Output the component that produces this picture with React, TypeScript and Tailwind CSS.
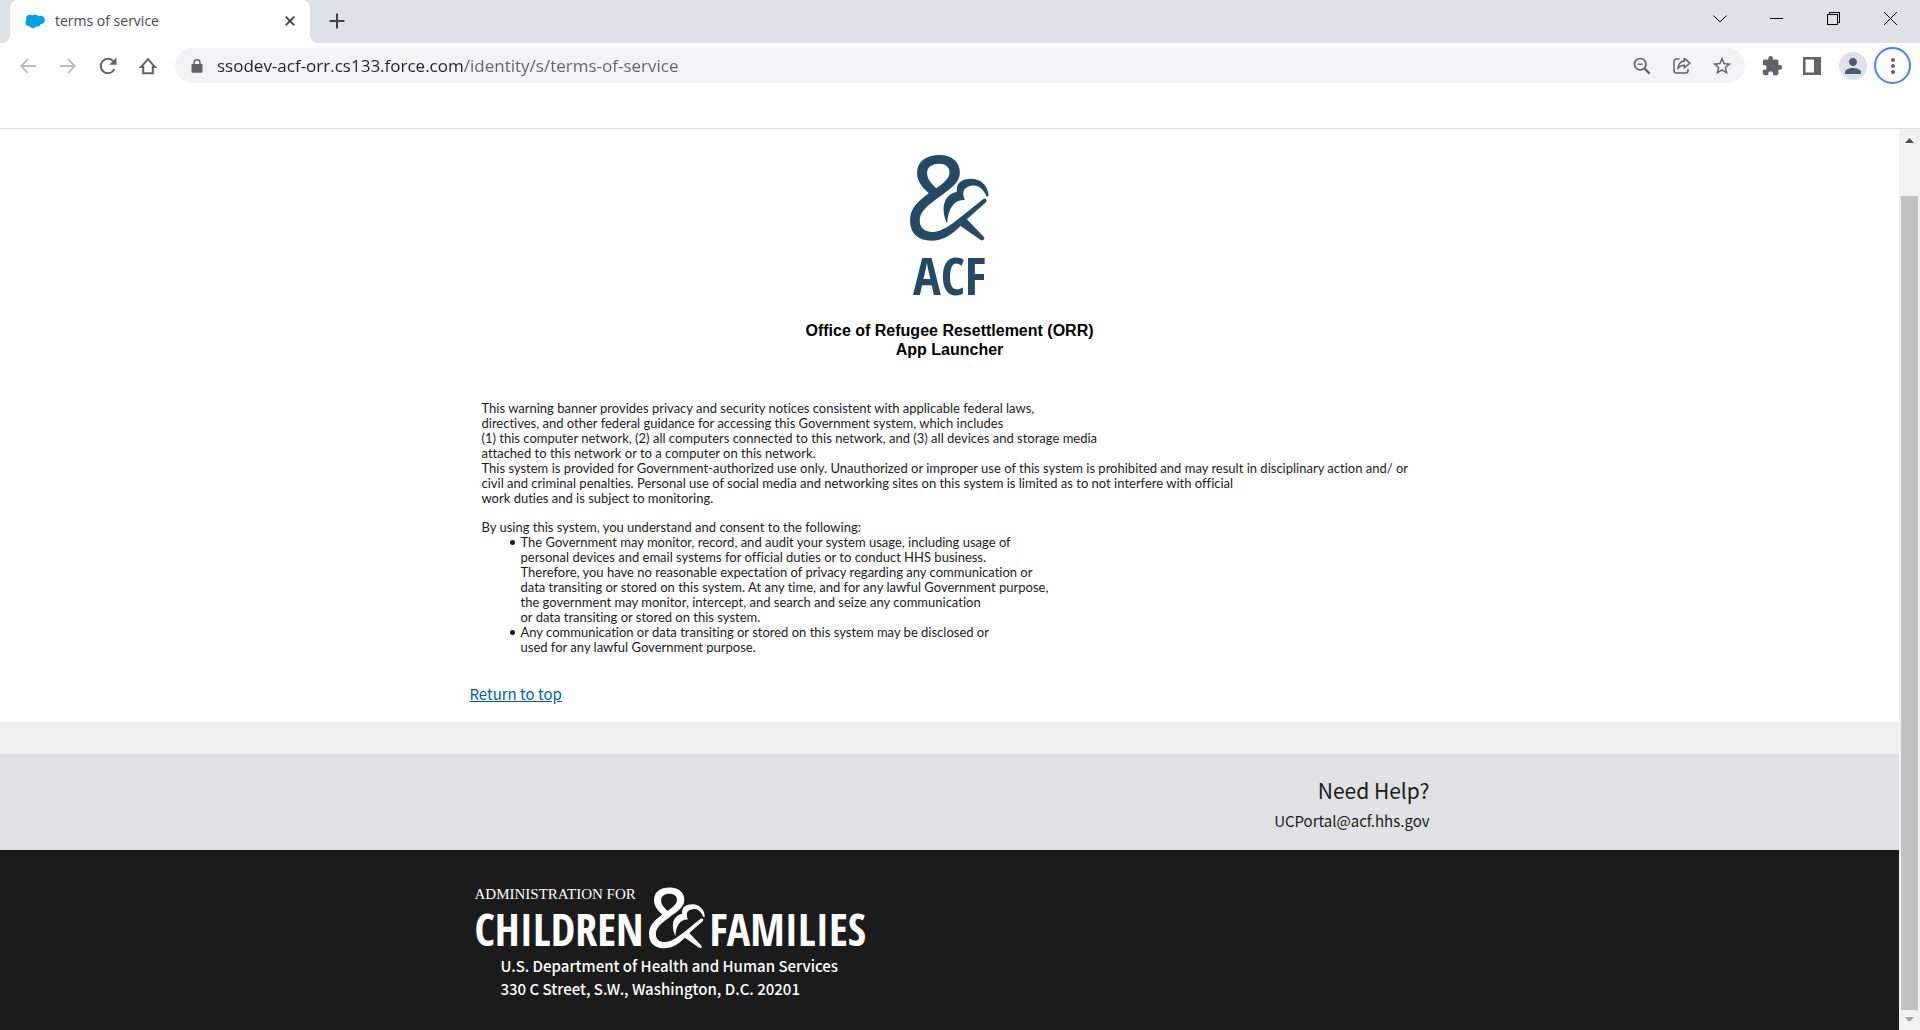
import type { ReactNode } from "react";
import { MdExtension, MdPerson, MdStarOutline } from "react-icons/md";

function AmpersandMark({ className }: { className: string }) {
  return (
    <svg viewBox="92 46 236 257" className={className} fill="currentColor" aria-hidden="true">
      <path
        fillRule="evenodd"
        d="M148 160C125 140 113 122 113 100C113 65 140 46 180 46C218 46 241 68 241 98C241 127 218 143 170 178C138 202 121 218 121 242C121 268 142 279 168 275C202 269 228 243 310 178C317 173 324 180 319 187L262 238L313 291C317 298 309 304 302 299L243 258C215 286 190 302 155 302C115 302 92 280 92 242C92 205 115 185 148 160ZM170 145C150 126 143 115 143 100C143 82 158 72 178 72C198 72 210 82 210 98C210 115 195 128 170 145Z"
      />
      <path d="M203 251C182 205 193 165 232 156C229 130 246 117 276 117C306 118 326 140 327 169L321 170C310 145 296 136 280 137C254 140 245 154 256 181C226 178 205 205 203 251Z" />
    </svg>
  );
}

function IconButton({ label, children }: { label: string; children: ReactNode }) {
  return (
    <button type="button" aria-label={label} className="flex h-9 w-10 shrink-0 items-center justify-center text-[#5f6368]">
      {children}
    </button>
  );
}

function TabStrip() {
  return (
    <div className="flex h-[43px] shrink-0 bg-[#dee1e6]">
      <div className="h-full w-[10px] bg-white">
        <div className="h-full rounded-br-lg bg-[#dee1e6]" />
      </div>
      <div className="flex w-[300px] items-center rounded-t-lg bg-white pr-2 pb-0.5 pl-[15px]">
        <svg viewBox="0 0 20 14" className="h-[14px] w-5" fill="#00a1e0" aria-hidden="true">
          <circle cx="5" cy="4.5" r="3.8" />
          <circle cx="10" cy="4.5" r="3.8" />
          <circle cx="15.5" cy="6" r="4.3" />
          <circle cx="4" cy="8.5" r="3.6" />
          <circle cx="8" cy="10" r="3.9" />
          <circle cx="12.5" cy="9.5" r="3" />
        </svg>
        <span className="ml-[10px] grow font-['Open_Sans',sans-serif] text-sm text-[#45474a]">terms of service</span>
        <button type="button" aria-label="Close tab" className="flex size-6 items-center justify-center text-[#3c4043]">
          <svg viewBox="0 0 10 10" className="size-[10px]" stroke="currentColor" strokeWidth="1.8" aria-hidden="true">
            <path d="M.7.7l8.6 8.6M9.3.7L.7 9.3" />
          </svg>
        </button>
      </div>
      <div className="h-full w-[10px] bg-white">
        <div className="h-full rounded-bl-lg bg-[#dee1e6]" />
      </div>
      <button type="button" aria-label="New tab" className="flex h-[42px] w-[34px] items-center justify-center text-[#3c4043]">
        <svg viewBox="0 0 16 16" className="size-4" stroke="currentColor" strokeWidth="2" aria-hidden="true">
          <path d="M8 0.5v15M0.5 8h15" />
        </svg>
      </button>
      <div className="ml-auto flex h-[37px] pr-px text-black">
        <button type="button" aria-label="Search tabs" className="flex w-[57px] items-center justify-center">
          <svg viewBox="0 0 14 14" className="size-[14px]" fill="none" stroke="currentColor" aria-hidden="true">
            <path d="M.5 3.5L7 10l6.500-6.500" />
          </svg>
        </button>
        <button type="button" aria-label="Minimize" className="flex w-[57px] items-center justify-center">
          <span className="h-px w-[13px] bg-black" />
        </button>
        <button type="button" aria-label="Restore" className="flex w-[57px] items-center justify-center">
          <svg viewBox="0 0 13 13" className="size-[13px]" fill="none" stroke="currentColor" shapeRendering="crispEdges" aria-hidden="true">
            <path d="M.5 2.500h10v10H.5zM2.500 2.500V.5h10v10h-2" />
          </svg>
        </button>
        <button type="button" aria-label="Close window" className="flex w-[57px] items-center justify-center">
          <svg viewBox="0 0 13 13" className="size-[13px]" stroke="currentColor" aria-hidden="true">
            <path d="M0 0l13 13M13 0L0 13" />
          </svg>
        </button>
      </div>
    </div>
  );
}

function Toolbar() {
  return (
    <div className="flex h-[45px] shrink-0 items-center bg-white pr-[9px] pl-2">
      <div className="flex opacity-45">
        <IconButton label="Back">
          <svg viewBox="0 0 16 16" className="size-4" fill="none" stroke="currentColor" strokeWidth="1.8" aria-hidden="true">
            <path d="M16 8H1.500M8 1L1.300 8 8 15" />
          </svg>
        </IconButton>
        <IconButton label="Forward">
          <svg viewBox="0 0 16 16" className="size-4" fill="none" stroke="currentColor" strokeWidth="1.8" aria-hidden="true">
            <path d="M0 8h14.500M8 1l6.700 7L8 15" />
          </svg>
        </IconButton>
      </div>
      <IconButton label="Reload">
        <svg viewBox="0 0 18 18" className="size-[18px]" fill="none" stroke="currentColor" strokeWidth="2" aria-hidden="true">
          <path d="M15.500 12A7.200 7.200 0 1 1 14.300 4.200" />
          <path d="M17.500 0.500v7.300h-7.300z" fill="currentColor" stroke="none" />
        </svg>
      </IconButton>
      <IconButton label="Home">
        <svg viewBox="0 0 18 18" className="size-[18px]" fill="none" stroke="currentColor" strokeWidth="2" aria-hidden="true">
          <path d="M2 10L9 2.200 16 10h-2.200v6.200H4.200V10z" />
        </svg>
      </IconButton>
      <div className="ml-[7px] flex h-[35px] min-w-0 grow items-center rounded-full bg-[#f1f3f4] pr-[3px] pl-4">
        <svg viewBox="0 0 12 14" className="h-[14px] w-3 shrink-0 text-[#5f6368]" fill="none" aria-hidden="true">
          <rect x="0.500" y="5" width="11" height="8.800" rx="1.200" fill="currentColor" />
          <path d="M3 5.500V3.800a3 3 0 0 1 6 0v1.700" stroke="currentColor" strokeWidth="1.500" />
        </svg>
        <input
          type="text"
          aria-label="Address"
          defaultValue="ssodev-acf-orr.cs133.force.com/identity/s/terms-of-service"
          className="ml-[14px] h-full min-w-0 grow bg-[linear-gradient(90deg,#202124_247px,#5f6368_247px)] bg-clip-text font-['Open_Sans',sans-serif] text-[17px] text-transparent outline-none"
        />
        <IconButton label="Zoom">
          <svg viewBox="0 0 18 18" className="size-[18px]" fill="none" stroke="currentColor" aria-hidden="true">
            <circle cx="7.200" cy="7.200" r="5.700" strokeWidth="1.700" />
            <path d="M11.300 11.300L16.600 16.600" strokeWidth="2.200" />
            <path d="M4.500 7.200h5.400" strokeWidth="1.300" />
          </svg>
        </IconButton>
        <IconButton label="Share">
          <svg viewBox="0 0 18 18" className="size-[18px]" fill="none" stroke="currentColor" strokeWidth="1.500" aria-hidden="true">
            <path d="M6.500 2H3.500a2.500 2.500 0 0 0-2.500 2.500v9a2.500 2.500 0 0 0 2.500 2.500h9a2.500 2.500 0 0 0 2.500-2.500v-1.500" />
            <path d="M11.300 1.400l5.600 4.700-5.600 4.700V8.300C8.500 8.300 6.500 9.200 4.800 11.700c.4-4.500 2.700-7.200 6.500-7.700z" strokeLinejoin="round" />
          </svg>
        </IconButton>
        <IconButton label="Bookmark this tab">
          <MdStarOutline className="size-[22px]" />
        </IconButton>
      </div>
      <div className="ml-[7px] flex items-center">
        <IconButton label="Extensions">
          <MdExtension className="size-[22px]" />
        </IconButton>
        <IconButton label="Side panel">
          <svg viewBox="0 0 18 18" className="size-[18px]" fill="currentColor" aria-hidden="true">
            <path fillRule="evenodd" d="M0 0h18v18H0zM2.500 2.500v13H11v-13z" />
          </svg>
        </IconButton>
        <button type="button" aria-label="Profile" className="mx-[7px] flex size-7 items-center justify-center rounded-full bg-[#dee1e6] text-[#4d5a6e]">
          <MdPerson className="size-6" />
        </button>
        <button type="button" aria-label="Menu" className="flex size-[37px] items-center justify-center rounded-full border-2 border-[#4285f4] text-[#5f6368]">
          <svg viewBox="0 0 4 16" className="h-4 w-1" fill="currentColor" aria-hidden="true">
            <circle cx="2" cy="2" r="2" />
            <circle cx="2" cy="8" r="2" />
            <circle cx="2" cy="14" r="2" />
          </svg>
        </button>
      </div>
    </div>
  );
}

function Scrollbar() {
  return (
    <div className="flex w-[21px] shrink-0 flex-col items-center bg-[#f1f1f1]" aria-hidden="true">
      <svg viewBox="0 0 9 5" className="mt-[9px] h-[5px] w-[9px]" fill="#505050">
        <path d="M0 5L4.500 0 9 5z" />
      </svg>
      <div className="mt-[53px] w-[17px] grow bg-[#c1c1c1]" />
      <svg viewBox="0 0 9 5" className="mt-[7px] mb-2 h-[5px] w-[9px]" fill="#a3a3a3">
        <path d="M0 0h9L4.500 5z" />
      </svg>
    </div>
  );
}

function Bullet({ children }: { children: ReactNode }) {
  return (
    <li className="flex">
      <span className="mt-[5px] mr-1.5 size-[5px] shrink-0 rounded-full bg-[#1b1b1b]" aria-hidden="true" />
      <div>{children}</div>
    </li>
  );
}

function Terms() {
  return (
    <div className="px-3 font-['Lato',sans-serif] text-[13px] leading-[15px] text-[#1b1b1b] [font-variant-ligatures:none]">
      <p>
        This warning banner provides privacy and security notices consistent with applicable federal laws,
        <br />
        directives, and other federal guidance for accessing this Government system, which includes
        <br />
        (1) this computer network, (2) all computers connected to this network, and (3) all devices and storage media
        <br />
        attached to this network or to a computer on this network.
      </p>
      <p>
        This system is provided for Government-authorized use only. Unauthorized or improper use of this system is prohibited and may result in disciplinary action and/ or
        <br />
        civil and criminal penalties. Personal use of social media and networking sites on this system is limited as to not interfere with official
        <br />
        work duties and is subject to monitoring.
      </p>
      <p className="mt-[14px]">By using this system, you understand and consent to the following:</p>
      <ul className="pl-7">
        <Bullet>
          The Government may monitor, record, and audit your system usage, including usage of
          <br />
          personal devices and email systems for official duties or to conduct HHS business.
          <br />
          Therefore, you have no reasonable expectation of privacy regarding any communication or
          <br />
          data transiting or stored on this system. At any time, and for any lawful Government purpose,
          <br />
          the government may monitor, intercept, and search and seize any communication
          <br />
          or data transiting or stored on this system.
        </Bullet>
        <Bullet>
          Any communication or data transiting or stored on this system may be disclosed or
          <br />
          used for any lawful Government purpose.
        </Bullet>
      </ul>
    </div>
  );
}

function PageFooter() {
  return (
    <footer className="flex grow flex-col font-['Noto_Sans_CJK_SC',sans-serif]">
      <div className="h-8 bg-[#f0f0f0]" />
      <div className="bg-[#dfe1e2]">
        <div className="mx-auto flex h-24 max-w-[960px] flex-col items-end pt-5 text-[#1b1b1b]">
          <h2 className="text-[21px] leading-8">Need Help?</h2>
          <a href="mailto:UCPortal@acf.hhs.gov" className="text-[15px] leading-[30px]">UCPortal@acf.hhs.gov</a>
        </div>
      </div>
      <div className="grow bg-[#1b1b1b] text-white">
        <div className="mx-auto max-w-[960px] pt-9 pb-[30px] pl-[5px]">
          <div className="flex h-[64px] items-end">
            <div className="flex h-full w-[168px] flex-col justify-between">
              <span className="font-['Liberation_Serif',serif] text-[15px] leading-4 whitespace-nowrap">ADMINISTRATION FOR</span>
              <span className="font-['Open_Sans_Condensed','Liberation_Sans_Narrow',sans-serif] text-[44px] leading-[42px] font-bold">CHILDREN</span>
            </div>
            <AmpersandMark className="ml-[6px] h-[62px] w-14 self-center" />
            <span className="ml-[5px] font-['Open_Sans_Condensed','Liberation_Sans_Narrow',sans-serif] text-[44px] leading-[42px] font-bold">FAMILIES</span>
          </div>
          <p className="mt-1 pl-[26px] text-[15px] leading-[23px] font-medium">
            U.S. Department of Health and Human Services
            <br />
            330 C Street, S.W., Washington, D.C. 20201
          </p>
        </div>
      </div>
    </footer>
  );
}

export default function App() {
  return (
    <div className="flex min-h-screen flex-col bg-white">
      <TabStrip />
      <Toolbar />
      <div className="h-[41px] border-b border-[#dadce0]" />
      <div className="flex grow">
        <div className="flex min-w-0 grow flex-col">
          <main className="mx-auto w-full max-w-[960px]">
            <div className="flex flex-col items-center pt-[26px] text-[#264a64]">
              <AmpersandMark className="h-[86px] w-[79px]" />
              <span className="mt-[7px] font-['Open_Sans_Condensed','Liberation_Sans_Narrow',sans-serif] text-[52px] leading-[54px] font-bold">ACF</span>
            </div>
            <h1 className="mt-[19px] text-center font-['Liberation_Sans',sans-serif] text-base leading-[19px] font-bold text-black">
              Office of Refugee Resettlement (ORR)
              <br />
              App Launcher
            </h1>
            <div className="mt-[42px]">
              <Terms />
            </div>
            <a href="#top" className="mt-[27px] mb-4 block w-fit font-['Noto_Sans_CJK_SC',sans-serif] text-[15px] leading-6 text-[#005ea2] underline">
              Return to top
            </a>
          </main>
          <PageFooter />
        </div>
        <Scrollbar />
      </div>
    </div>
  );
}
